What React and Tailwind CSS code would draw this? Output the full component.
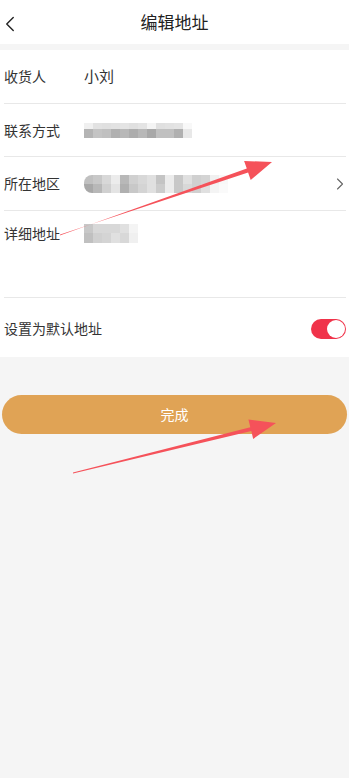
import { ChevronLeft, ChevronRight } from "lucide-react";

const phoneTop = ["bg-[#f0f0f0]", "bg-[#e2e2e2]", "bg-[#e0e0e0]", "bg-[#e2e2e2]", "bg-[#e4e4e4]", "bg-[#e0e0e0]", "bg-[#e4e4e4]", "bg-[#f4f4f4]", "bg-[#e0e0e0]", "bg-[#e2e2e2]", "bg-[#e4e4e4]", "bg-[#f8f8f8]"];
const phoneBottom = ["bg-[#b4b4b4]", "bg-[#c4c4c4]", "bg-[#c0c0c0]", "bg-[#b0b0b0]", "bg-[#b8b8b8]", "bg-[#adadad]", "bg-[#b8b8b8]", "bg-[#a8a8a8]", "bg-[#c0c0c0]", "bg-[#c0c0c0]", "bg-[#b0b0b0]", "bg-[#e8e8e8]"];
const areaTop = ["bg-[#c0c0c0]", "bg-[#c8c8c8]", "bg-[#d8d8d8]", "bg-[#ececec]", "bg-[#b8b8b8]", "bg-[#d0d0d0]", "bg-[#d8d8d8]", "bg-[#e0e0e0]", "bg-[#c4c4c4]", "bg-[#ececec]", "bg-[#c8c8c8]", "bg-[#e0e0e0]", "bg-[#d0d0d0]", "bg-[#d4d4d4]", "bg-[#f0f0f0]", "bg-[#f8f8f8]"];
const areaBottom = ["bg-[#a8a8a8]", "bg-[#b8b8b8]", "bg-[#d0d0d0]", "bg-[#e4e4e4]", "bg-[#b0b0b0]", "bg-[#c8c8c8]", "bg-[#d4d4d4]", "bg-[#e0e0e0]", "bg-[#cccccc]", "bg-[#ececec]", "bg-[#c8c8c8]", "bg-[#d8d8d8]", "bg-[#d0d0d0]", "bg-[#e0e0e0]", "bg-[#f4f4f4]", "bg-[#fafafa]"];
const detailTop = ["bg-[#c8c8c8]", "bg-[#d8d8d8]", "bg-[#d8d8d8]", "bg-[#d8d8d8]", "bg-[#e0e0e0]", "bg-[#f4f4f4]"];
const detailBottom = ["bg-[#c0c0c0]", "bg-[#d0d0d0]", "bg-[#d4d4d4]", "bg-[#e0e0e0]", "bg-[#d8d8d8]", "bg-[#f0f0f0]"];

function Mosaic({ top, bottom, topH, bottomH, rounded }) {
  return (
    <div className={`flex flex-col overflow-hidden ${rounded ? "rounded-l-lg" : ""}`}>
      <div className="flex">
        {top.map((c, i) => (
          <div key={i} className={`w-[9px] ${topH} ${c}`} />
        ))}
      </div>
      <div className="flex">
        {bottom.map((c, i) => (
          <div key={i} className={`w-[9px] ${bottomH} ${c}`} />
        ))}
      </div>
    </div>
  );
}

function Row({ label, children, className = "" }) {
  return (
    <div className={`flex items-center border-b border-[#e8e8e8] ${className}`}>
      <span className="w-[80px] shrink-0">{label}</span>
      {children}
    </div>
  );
}

export default function App() {
  return (
    <div
      className="relative min-h-[778px] bg-[#f5f5f5] text-[14px] text-[#333]"
      style={{ fontFamily: '"Noto Sans CJK SC", "Noto Sans", sans-serif' }}
    >
      <div className="h-[44px] bg-white flex items-center justify-center relative">
        <ChevronLeft size={26} strokeWidth={1.3} className="absolute left-[-3px] top-[11px] text-[#222]" />
        <span className="text-[17px] text-[#222]">编辑地址</span>
      </div>

      <div className="mt-[6px] bg-white pl-[4px] pr-[3px]">
        <Row label="收货人" className="h-[54px]">
          <span className="text-[15px]">小刘</span>
        </Row>
        <Row label="联系方式" className="h-[53px]">
          <Mosaic top={phoneTop} bottom={phoneBottom} topH="h-[6px]" bottomH="h-[9px]" />
        </Row>
        <Row label="所在地区" className="h-[54px]">
          <Mosaic top={areaTop} bottom={areaBottom} topH="h-[9px]" bottomH="h-[9px]" rounded />
          <ChevronRight size={20} strokeWidth={1.3} className="ml-auto mr-[-4px] text-[#666]" />
        </Row>
        <div className="h-[87px] flex items-start border-b border-[#e8e8e8] pt-[12px]">
          <span className="w-[80px] shrink-0">详细地址</span>
          <div className="mt-[1px]">
            <Mosaic top={detailTop} bottom={detailBottom} topH="h-[9px]" bottomH="h-[10px]" />
          </div>
        </div>
        <div className="h-[59px] flex items-center justify-between pt-[2px]">
          <span>设置为默认地址</span>
          <div className="w-[35px] h-[20px] rounded-full bg-[#f0334a] flex items-center justify-end p-[1px]">
            <div className="w-[18px] h-[18px] rounded-full bg-white" />
          </div>
        </div>
      </div>

      <div className="px-[2px] mt-[38px]">
        <button className="w-full h-[39px] rounded-full bg-[#e0a355] text-white text-[14px]">完成</button>
      </div>

      <svg className="absolute inset-0 pointer-events-none" width="349" height="778" viewBox="0 0 349 778">
        <polygon
          points="60.2,234.5 248.1,172.4 250.7,180 272,162 244.1,161 246.8,168.6 59.8,235.5"
          fill="#f5525a"
        />
        <polygon
          points="73,472.5 250.3,427.3 248.4,419.5 276,423 253.2,438.9 251.3,431.1 73,473.5"
          fill="#f5525a"
        />
      </svg>
    </div>
  );
}
